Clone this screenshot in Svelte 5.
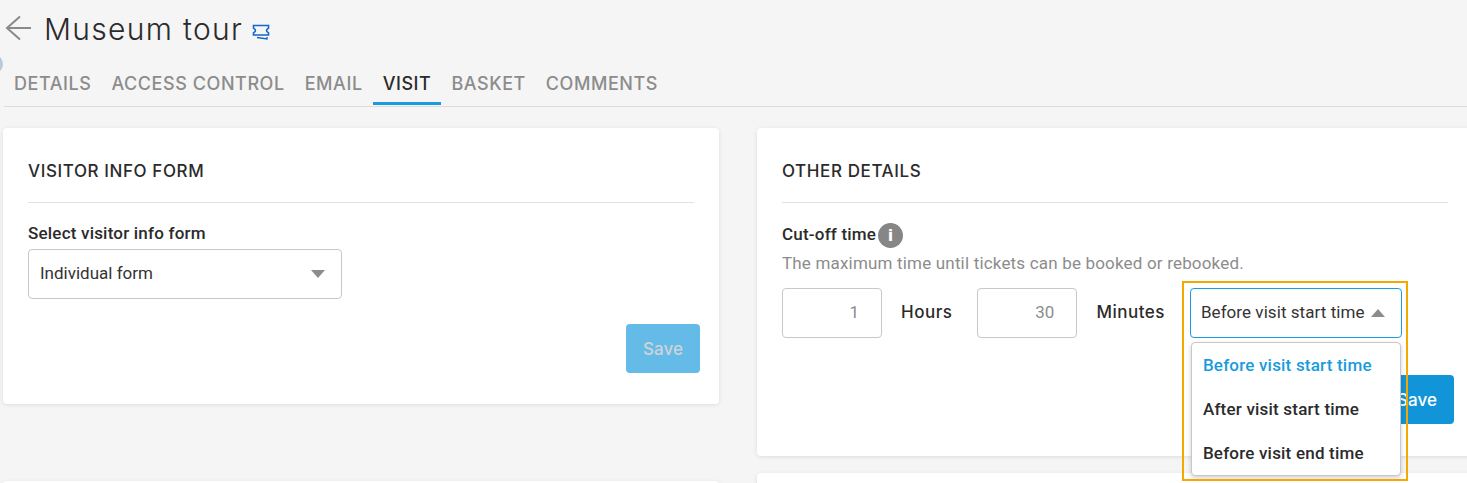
<script>
  let tabs = ["DETAILS", "ACCESS CONTROL", "EMAIL", "VISIT", "BASKET", "COMMENTS"];
  let aktiv = "VISIT";
  let options = ["Before visit start time", "After visit start time", "Before visit end time"];
</script>

<div class="page">
  <span class="edge-dot"></span>

  <header class="title-row">
    <svg class="back" width="28" height="26" viewBox="0 0 28 26" fill="none" stroke="#8a8a8a" stroke-width="2">
      <path d="M26 13H2M15 1.500L2 13L15 24.500" />
    </svg>
    <h1>Museum tour</h1>
    <svg class="ticket" width="18" height="16" viewBox="0 0 18 16" fill="none" stroke="#1565c8" stroke-width="1.6">
      <path d="M1.500 1.500H16.500V4.200Q14.500 5.500 14.500 6.500Q14.500 7.500 16.500 8.800V11H1.500V8.800Q3.500 7.500 3.500 6.500Q3.500 5.500 1.500 4.200Z" />
      <path d="M5 13.500L15 15V13" stroke-width="1.400" />
    </svg>
  </header>

  <nav class="tabs">
    {#each tabs as tab}
      <span class="tab" class:active={tab === aktiv}>{tab}</span>
    {/each}
  </nav>

  <div class="columns">
    <div class="col">
      <section class="card left-card">
        <h2>VISITOR INFO FORM</h2>
        <label class="field-label" for="visitor-form">Select visitor info form</label>
        <div class="select" id="visitor-form">
          <span class="select-text">Individual form</span>
          <i class="caret down"></i>
        </div>
        <div class="actions">
          <button class="save disabled">Save</button>
        </div>
      </section>
      <section class="card stub"></section>
    </div>

    <div class="col">
      <section class="card right-card">
        <h2>OTHER DETAILS</h2>
        <div class="cutoff-label">
          <span class="cutoff-text">Cut-off time</span>
          <span class="info">i</span>
        </div>
        <p class="hint">The maximum time until tickets can be booked or rebooked.</p>
        <div class="time-row">
          <div class="num">1</div>
          <span class="unit">Hours</span>
          <div class="num">30</div>
          <span class="unit">Minutes</span>
          <div class="dropdown-wrap">
            <div class="select open">
              <span class="select-text">Before visit start time</span>
              <i class="caret up"></i>
            </div>
            <ul class="menu">
              {#each options as opt, i}
                <li class:current={i === 0}>{opt}</li>
              {/each}
            </ul>
            <div class="highlight"></div>
          </div>
        </div>
        <div class="actions right">
          <button class="save">Save</button>
        </div>
      </section>
      <section class="card stub"></section>
    </div>
  </div>
</div>

<style>
  :global(body) {
    background: #f5f5f5;
    overflow: hidden;
  }

  .page {
    position: relative;
    height: 483px;
    overflow: hidden;
    font-family: Roboto, "Liberation Sans", sans-serif;
    color: #2b2b2b;
  }

  .edge-dot {
    position: absolute;
    left: -17px;
    top: 54px;
    width: 20px;
    height: 20px;
    border-radius: 50%;
    background: #b9c9dc;
  }

  .title-row {
    display: flex;
    align-items: center;
    height: 60px;
    padding-left: 5px;
  }

  .back {
    margin-right: 11px;
    margin-top: -4px;
  }

  h1 {
    margin: -2px 9px 0 0;
    font-family: Inter, "Open Sans", sans-serif;
    font-size: 30px;
    font-weight: 300;
    letter-spacing: 1.3px;
    color: #2b2b2b;
  }

  .ticket {
    margin-top: 3px;
  }

  .tabs {
    display: flex;
    height: 46px;
    border-bottom: 1px solid #dcdcdc;
    margin-left: 4px;
  }

  .tab {
    box-sizing: border-box;
    padding: 13px 10px 0;
    height: 45px;
    font-family: Inter, "Open Sans", sans-serif;
    font-size: 18px;
    font-weight: 500;
    color: #8c8c8c;
    letter-spacing: 0.56px;
  }

  .tab.active {
    color: #2b2b2b;
    border-bottom: 3px solid #1a9bdc;
  }

  .columns {
    display: grid;
    grid-template-columns: 716px 716px;
    column-gap: 38px;
    padding: 21px 0 0 3px;
  }

  .col {
    display: flex;
    flex-direction: column;
  }

  .card {
    background: #fff;
    border-radius: 4px;
    box-shadow: 0 1px 4px rgba(0, 0, 0, 0.1);
    padding: 0 25px;
    box-sizing: border-box;
  }

  .left-card {
    height: 276px;
  }

  .right-card {
    height: 328px;
  }

  .stub {
    height: 40px;
  }

  .left-card + .stub {
    margin-top: 77px;
  }

  .right-card + .stub {
    margin-top: 17px;
  }

  h2 {
    margin: 0;
    padding: 33px 0 21px;
    height: 20px;
    line-height: 20px;
    font-family: Inter, "Open Sans", sans-serif;
    font-size: 17px;
    font-weight: 500;
    letter-spacing: 0.6px;
    border-bottom: 1px solid #e2e2e2;
    color: #2b2b2b;
    box-sizing: content-box;
  }

  .field-label {
    display: block;
    margin: 20px 0 6px;
    font-size: 17px;
    font-weight: 500;
    letter-spacing: 0.2px;
    line-height: 20px;
  }

  .select {
    display: flex;
    align-items: center;
    justify-content: space-between;
    box-sizing: border-box;
    width: 314px;
    height: 50px;
    padding: 0 16px 0 11px;
    border: 1px solid #c8c8c8;
    border-radius: 4px;
    background: #fff;
    font-size: 17px;
    color: #333;
  }

  .select-text {
    margin-bottom: 2px;
  }

  .select.open {
    width: 212px;
    border-color: #1a9bdc;
    padding: 0 16px 0 10px;
    letter-spacing: 0.06px;
  }

  .caret {
    width: 0;
    height: 0;
    border-left: 7px solid transparent;
    border-right: 7px solid transparent;
  }

  .caret.down {
    border-top: 8px solid #8c8c8c;
  }

  .caret.up {
    border-bottom: 8px solid #8c8c8c;
  }

  .actions {
    display: flex;
    justify-content: flex-end;
    margin: 25px -6px 0 0;
  }

  .save {
    width: 74px;
    height: 49px;
    border: 0;
    border-radius: 4px;
    background: #1295d8;
    color: #fff;
    font-family: Inter, "Open Sans", sans-serif;
    font-size: 17px;
    font-weight: 500;
  }

  .save.disabled {
    background: #64bbe8;
    color: #cfd3d6;
  }

  .cutoff-label {
    display: flex;
    align-items: center;
    gap: 2px;
    margin-top: 20px;
    font-size: 17px;
    font-weight: 500;
    letter-spacing: 0.2px;
  }

  .cutoff-text {
    margin-bottom: 3px;
  }

  .info {
    display: inline-flex;
    align-items: center;
    justify-content: center;
    width: 25px;
    height: 25px;
    border-radius: 50%;
    background: #868686;
    color: #fff;
    font-family: "DejaVu Sans", sans-serif;
    font-size: 16px;
    font-weight: 700;
  }

  .hint {
    margin: 5px 0 0;
    font-size: 17px;
    letter-spacing: 0.18px;
    line-height: 20px;
    color: #8c8c8c;
  }

  .time-row {
    display: flex;
    align-items: center;
    margin-top: 15px;
  }

  .num {
    box-sizing: border-box;
    width: 100px;
    height: 50px;
    padding-right: 22px;
    border: 1px solid #c8c8c8;
    border-radius: 4px;
    text-align: right;
    line-height: 46px;
    font-size: 17px;
    color: #8c8c8c;
  }

  .unit {
    margin: 0 25px 2px 19px;
    font-family: Inter, "Open Sans", sans-serif;
    font-size: 17px;
    font-weight: 500;
    letter-spacing: 0.5px;
    color: #2b2b2b;
  }

  .dropdown-wrap {
    position: relative;
    z-index: 2;
  }

  .menu {
    position: absolute;
    left: 1px;
    top: 54px;
    width: 210px;
    box-sizing: border-box;
    margin: 0;
    padding: 0;
    list-style: none;
    background: #fff;
    border: 1px solid #c8c8c8;
    border-radius: 4px;
    box-shadow: 0 2px 5px rgba(0, 0, 0, 0.18);
  }

  .menu li {
    height: 44px;
    line-height: 44px;
    padding-left: 11px;
    font-size: 17px;
    font-weight: 500;
    letter-spacing: 0.2px;
    color: #2b2b2b;
  }

  .menu li.current {
    color: #1a9bdc;
  }

  .highlight {
    position: absolute;
    left: -8px;
    top: -7px;
    width: 226px;
    height: 200px;
    border: 2px solid #f5a800;
    box-sizing: border-box;
    pointer-events: none;
  }

  .actions.right {
    margin-top: 37px;
  }
</style>
